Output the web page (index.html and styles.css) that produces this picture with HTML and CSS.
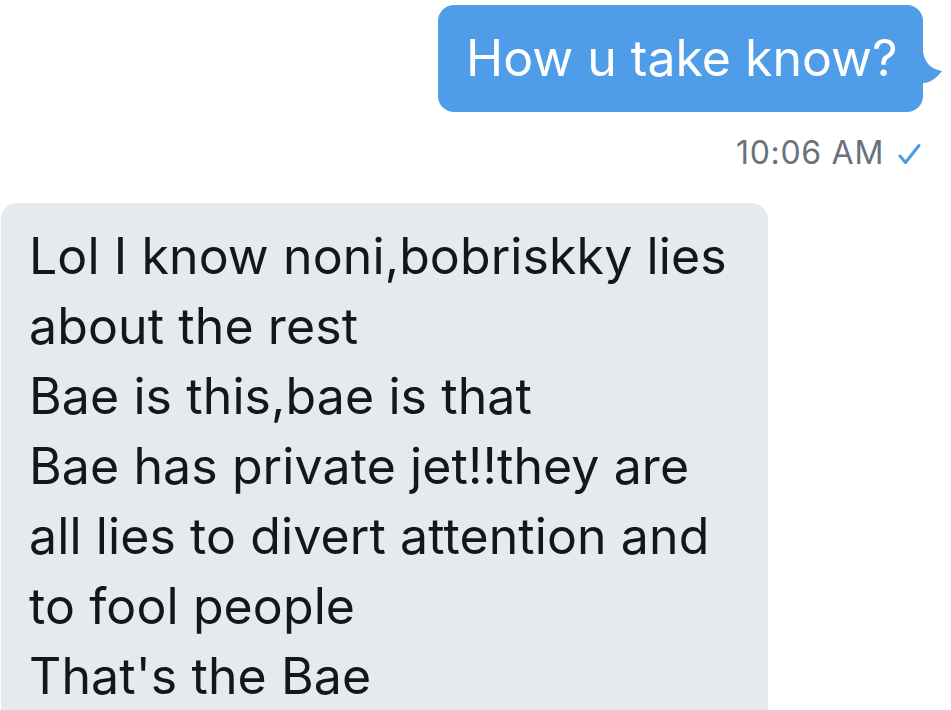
FILE: index.html
```html
<!DOCTYPE html>
<html>
<head>
<meta charset="utf-8">
<link rel="stylesheet" href="styles.css">
</head>
<body>
<div class="thread">
  <div class="row-out">
    <div class="bubble-out">
      <span class="text-out">How u take know?</span>
      <svg class="tail" width="22" height="36" viewBox="0 0 22 36"><path d="M0 2 L2 2 C4 13 10 19 21 21 C18 25 11 33 2 33 L0 33 Z" fill="#4f9de8"/></svg>
    </div>
  </div>
  <div class="meta">
    <span class="time">10:06 AM</span>
    <svg class="check" width="24" height="22" viewBox="0 0 24 22"><path d="M2 13 L7.5 19.5 L21 2.5" fill="none" stroke="#4a9be6" stroke-width="3" stroke-linecap="round" stroke-linejoin="round"/></svg>
  </div>
  <div class="bubble-in">
    <p class="text-in">Lol I know noni,bobriskky lies<br>about the rest<br>Bae is this,bae is that<br>Bae has private jet!!they are<br>all lies to divert attention and<br>to fool people<br>That's the Bae</p>
  </div>
</div>
</body>
</html>
```
FILE: styles.css
```css
html, body {
  margin: 0;
  padding: 0;
  background: #ffffff;
}
body {
  font-family: Inter, "Liberation Sans", sans-serif;
  width: 951px;
  height: 710px;
  overflow: hidden;
}
.thread {
  display: flex;
  flex-direction: column;
}
.row-out {
  display: flex;
  justify-content: flex-end;
  padding: 5px 28px 0 0;
}
.bubble-out {
  position: relative;
  background: #4f9de8;
  border-radius: 16px;
  height: 107px;
  width: 485px;
  box-sizing: border-box;
  padding-left: 28px;
  display: flex;
  align-items: center;
}
.text-out {
  color: #ffffff;
  font-size: 50px;
  line-height: 1;
  margin-top: -2px;
}
.tail {
  position: absolute;
  right: -20px;
  top: 45px;
}
.meta {
  display: flex;
  justify-content: flex-end;
  align-items: center;
  gap: 14px;
  margin-top: 22px;
  padding-right: 29px;
  height: 38px;
}
.time {
  color: #68717d;
  font-size: 32px;
  line-height: 38px;
  letter-spacing: 0.7px;
}
.check {
  margin-top: 2px;
}
.bubble-in {
  margin: 31px 0 0 1px;
  width: 767px;
  background: #e6e9ee;
  border-radius: 16px;
  padding: 18px 0 40px 28px;
  box-sizing: border-box;
}
.text-in {
  margin: 0;
  color: #14171a;
  font-size: 50px;
  line-height: 70px;
  letter-spacing: 0.1px;
}
```
